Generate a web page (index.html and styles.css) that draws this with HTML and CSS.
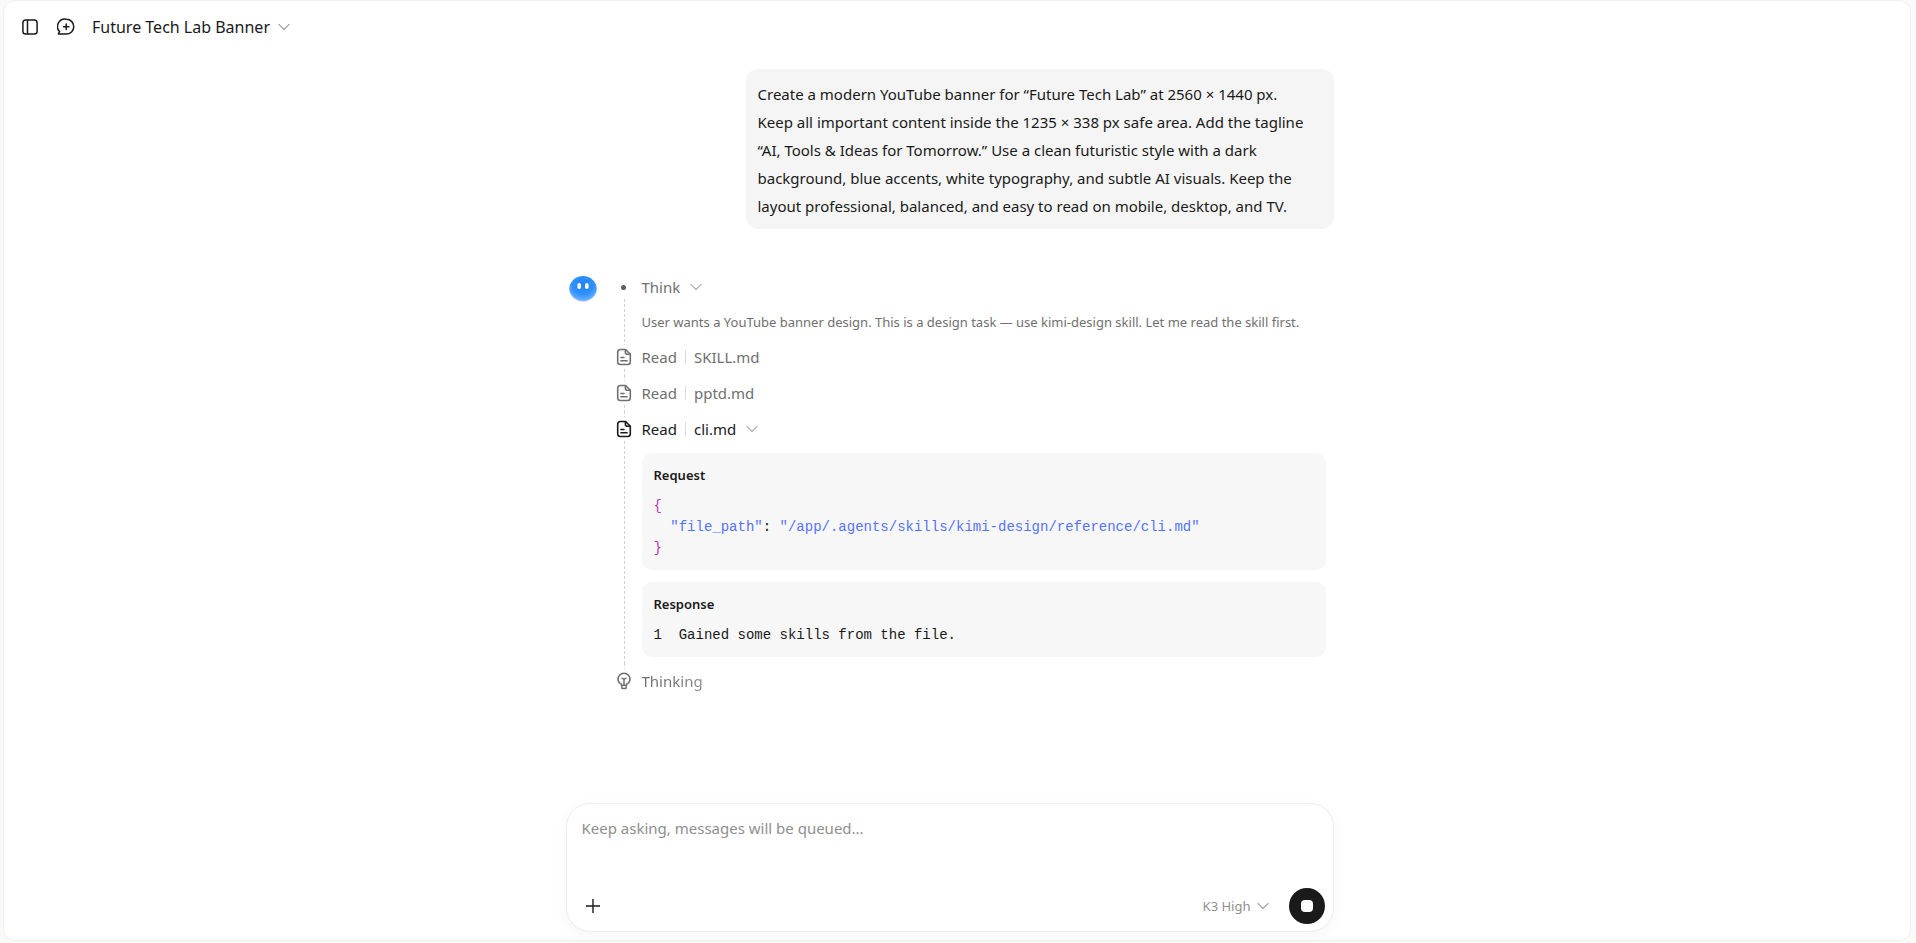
FILE: index.html
```html
<!DOCTYPE html>
<html lang="en">
<head>
<meta charset="utf-8">
<title>Future Tech Lab Banner</title>
<link rel="stylesheet" href="styles.css">
</head>
<body>
<svg class="defs" aria-hidden="true">
  <symbol id="chevron" viewBox="0 0 12 12"><path d="M1 3.5 6 8.5 11 3.5" fill="none" stroke="currentColor" stroke-width="1.2" stroke-linecap="round" stroke-linejoin="round"/></symbol>
  <symbol id="file" viewBox="0 0 16 18"><g fill="none" stroke="currentColor" stroke-width="1.6" stroke-linecap="round" stroke-linejoin="round"><path d="M9.6 1.5H4.4A2.700 2.700 0 0 0 1.700 4.200v9.600a2.700 2.700 0 0 0 2.700 2.700h7.200a2.700 2.700 0 0 0 2.700-2.700V6.200z"/><path d="M9.400 1.700v2.600a2 2 0 0 0 2 2h2.700M4.900 9.500H8M4.900 12.700h6.200"/></g></symbol>
</svg>
<div class="panel">
  <header class="topbar">
    <button class="icon-btn" aria-label="Toggle sidebar"><svg viewBox="0 0 16 16" width="16" height="16" fill="none" stroke="currentColor" stroke-width="1.5"><rect x=".9" y="1" width="14.2" height="14" rx="2.8"/><path d="M5.5 1v14"/></svg></button>
    <button class="icon-btn" aria-label="New chat"><svg viewBox="0 0 18 18" width="18" height="18" fill="none" stroke="currentColor" stroke-width="1.5" stroke-linecap="round" stroke-linejoin="round"><path d="M9.300 1.200a7.400 7.400 0 0 1 0 14.900H2.100c-.6 0-.8-.5-.5-.9l1-1.600A7.400 7.400 0 0 1 9.300 1.200z"/><path d="M9.200 6v5.400M6.500 8.700h5.400"/></svg></button>
    <button class="title"><span>Future Tech Lab Banner</span><svg class="chevron" aria-hidden="true"><use href="#chevron"/></svg></button>
  </header>
  <div class="scroller">
  <main class="column">
    <p class="bubble">Create a modern YouTube banner for “Future Tech Lab” at 2560 × 1440 px. Keep all important content inside the 1235 × 338 px safe area. Add the tagline “AI, Tools &amp; Ideas for Tomorrow.” Use a clean futuristic style with a dark background, blue accents, white typography, and subtle AI visuals. Keep the layout professional, balanced, and easy to read on mobile, desktop, and TV.</p>
    <section class="reply">
      <svg class="avatar" viewBox="0 0 30 28" aria-hidden="true">
        <defs>
          <radialGradient id="face" cx=".5" cy=".35" r=".65"><stop offset="0" stop-color="#1f83fb"/><stop offset=".6" stop-color="#3090fe"/><stop offset="1" stop-color="#6db4ff"/></radialGradient>
        </defs>
        <ellipse cx="15" cy="14.4" rx="14" ry="12.6" fill="#e3e1fb"/>
        <ellipse cx="15" cy="13.5" rx="13.6" ry="12.4" fill="url(#face)"/>
        <rect x="9.4" y="8" width="3.6" height="6" rx="1.8" fill="#fff"/><rect x="17" y="8" width="3.6" height="6" rx="1.8" fill="#fff"/>
      </svg>
      <ol class="steps">
        <li class="step">
          <span class="rail"><span class="mark"><span class="dot"></span></span></span>
          <div class="body">
            <button class="head"><span>Think</span><svg class="chevron" aria-hidden="true"><use href="#chevron"/></svg></button>
            <p class="note">User wants a YouTube banner design. This is a design task — use kimi-design skill. Let me read the skill first.</p>
          </div>
        </li>
        <li class="step">
          <span class="rail"><span class="mark"><svg class="file" aria-hidden="true"><use href="#file"/></svg></span></span>
          <div class="body"><button class="head"><span>Read</span><span class="name">SKILL.md</span></button></div>
        </li>
        <li class="step">
          <span class="rail"><span class="mark"><svg class="file" aria-hidden="true"><use href="#file"/></svg></span></span>
          <div class="body"><button class="head"><span>Read</span><span class="name">pptd.md</span></button></div>
        </li>
        <li class="step current">
          <span class="rail"><span class="mark"><svg class="file" aria-hidden="true"><use href="#file"/></svg></span></span>
          <div class="body">
            <button class="head"><span>Read</span><span class="name">cli.md</span><svg class="chevron" aria-hidden="true"><use href="#chevron"/></svg></button>
            <div class="cards">
              <div class="card">
                <h3>Request</h3>
<pre><span class="brace">{</span>
  <span class="str">"file_path"</span>: <span class="str">"/app/.agents/skills/kimi-design/reference/cli.md"</span>
<span class="brace">}</span></pre>
              </div>
              <div class="card">
                <h3>Response</h3>
                <pre>1  Gained some skills from the file.</pre>
              </div>
            </div>
          </div>
        </li>
        <li class="step">
          <span class="rail"><span class="mark"><svg width="16" height="18" viewBox="0 0 16 18" fill="none" stroke="currentColor" stroke-width="1.5" stroke-linecap="round" stroke-linejoin="round" aria-hidden="true"><path d="M5.400 13.200v-1.100C3.400 11 2 9.300 2 7.200a6 6 0 0 1 12 0c0 2.100-1.400 3.800-3.400 4.900v1.100z"/><path d="M5.800 14.200v1.200c0 .7.5 1.100 1.100 1.100h2.200c.6 0 1.100-.4 1.100-1.100v-1.200M6 6.200l2 1.200 2-1.200M8 7.400v5.400"/></svg></span></span>
          <div class="body"><div class="head"><span class="pending">Thinking</span></div></div>
        </li>
      </ol>
    </section>
    <form class="composer">
      <textarea rows="2" aria-label="Message" placeholder="Keep asking, messages will be queued..."></textarea>
      <div class="tools">
        <button type="button" class="add" aria-label="Add attachment"><svg width="22" height="22" viewBox="0 0 22 22" stroke="currentColor" stroke-width="1.4"><path d="M11 4v14M4 11h14"/></svg></button>
        <button type="button" class="model"><span>K3 High</span><svg class="chevron" aria-hidden="true"><use href="#chevron"/></svg></button>
        <button type="button" class="stop" aria-label="Stop"><span></span></button>
      </div>
    </form>
  </main>
  </div>
</div>
</body>
</html>
```
FILE: styles.css
```css
* { box-sizing: border-box; }
body {
  margin: 0;
  height: 100vh;
  padding: 0 5px 2px 3px;
  background: #fafaf9;
  color: #1a1a1a;
  font: 15px/28px "Segoe UI", "Noto Sans", sans-serif;
}
h3, p, ol, pre { margin: 0; padding: 0; }
button {
  padding: 0;
  border: 0;
  background: none;
  color: inherit;
  font: inherit;
  cursor: pointer;
}
svg { flex: none; display: block; }
.defs { position: absolute; width: 0; height: 0; }
.chevron { width: 12px; height: 12px; color: #a6a6a6; }

.panel {
  height: 100%;
  display: flex;
  flex-direction: column;
  border: 1px solid #f0f0ef;
  border-radius: 12px;
  background: #fff;
}
.topbar {
  flex: none;
  display: flex;
  align-items: center;
  gap: 12px;
  height: 52px;
  padding-left: 14px;
}
.icon-btn { display: grid; place-items: center; width: 24px; height: 24px; }
.title {
  display: flex;
  align-items: center;
  gap: 8px;
  padding-left: 2px;
  font-size: 16px;
}

.scroller {
  flex: 1;
  display: flex;
  justify-content: center;
  padding-right: 15px;
}
.column {
  display: flex;
  flex-direction: column;
  width: 768px;
  max-width: 100%;
  padding: 16px 0 8px;
}
.bubble {
  align-self: flex-end;
  max-width: 588px;
  padding: 11px 22px 9px 12px;
  border-radius: 12px;
  background: #f5f5f5;
}
.reply { display: flex; gap: 14px; margin-top: 40px; padding: 0 8px 0 2px; }
.avatar { width: 30px; height: 28px; margin-top: 6px; }
.steps { flex: 1; min-width: 0; list-style: none; color: #707070; }
.step { display: flex; gap: 6px; }
.rail {
  flex: none;
  display: flex;
  flex-direction: column;
  width: 24px;
}
.rail::before, .rail::after {
  content: "";
  width: 1px;
  margin-left: 12px;
  background: repeating-linear-gradient(#d2d2d2 0 3px, transparent 3px 5px);
}
.rail::before { height: 6px; }
.rail::after { flex: 1; }
.step:first-child .rail::before,
.step:last-child .rail::after { visibility: hidden; }
.mark { display: grid; place-items: center; height: 24px; }
.dot { width: 5px; height: 5px; border-radius: 50%; background: #5f5f5f; }
.file { width: 16px; height: 18px; }
.body { flex: 1; min-width: 0; }
.head { display: flex; align-items: center; height: 36px; }
.head .chevron { margin-left: 10px; color: #b5b5b5; }
.name { display: flex; align-items: center; }
.name::before {
  content: "";
  width: 1px;
  height: 14px;
  margin: 0 8px;
  background: #dedede;
}
.note { padding: 7px 0 6px; font-size: 13px; line-height: 21px; }
.current { color: #1a1a1a; }
.pending {
  background: linear-gradient(90deg, #707070 50%, #909090);
  background-clip: text;
  color: transparent;
}
.cards { display: grid; gap: 12px; padding: 6px 0; }
.card { padding: 12px 12px 11px; border-radius: 10px; background: #f7f7f7; overflow-x: auto; }
.card h3 { margin-bottom: 11px; font-size: 13px; font-weight: 600; line-height: 20px; }
pre { font: 14px/21px "Liberation Mono", monospace; }
.brace { color: #b73aaf; }
.str { color: #5573fb; }

.composer {
  margin-top: auto;
  display: flex;
  flex-direction: column;
  padding: 10px 8px 7px 15px;
  border: 1px solid #ededed;
  border-radius: 24px;
  background: #fff;
  box-shadow: 0 4px 16px rgba(0, 0, 0, .04);
}
textarea {
  height: 73px;
  padding: 0;
  border: 0;
  outline: 0;
  resize: none;
  background: none;
  color: inherit;
  font: inherit;
}
textarea::placeholder { color: #8f8f8f; }
.tools { display: flex; align-items: center; height: 37px; }
.model {
  display: flex;
  align-items: center;
  gap: 6px;
  margin: 0 20px 0 auto;
  color: #909090;
  font-size: 13px;
}
.stop {
  display: grid;
  place-items: center;
  width: 36px;
  height: 36px;
  border-radius: 50%;
  background: #1a1a1a;
}
.stop span { width: 12px; height: 12px; border-radius: 4px; background: #fff; }
```
